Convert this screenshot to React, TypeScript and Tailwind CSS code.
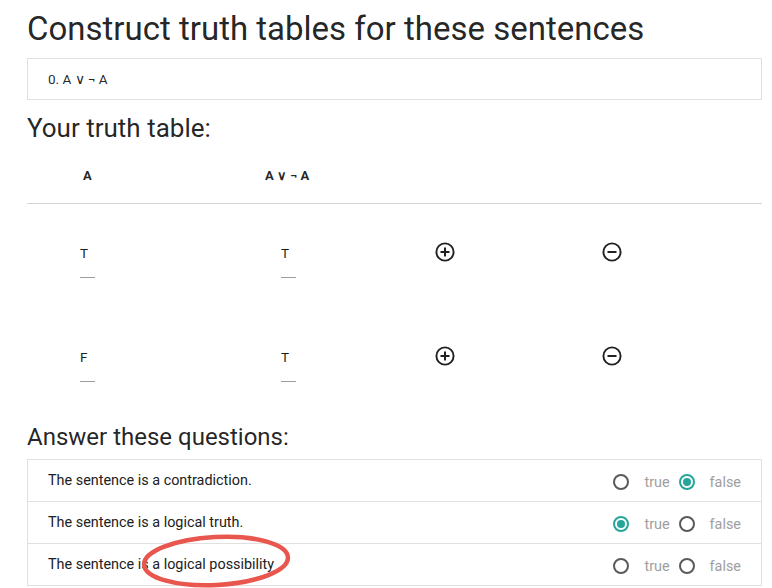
import React from 'react';

const rows = [
  { a: 'T', s: 'T' },
  { a: 'F', s: 'T' },
];

const questions = [
  { text: 'The sentence is a contradiction.', value: 'false' },
  { text: 'The sentence is a logical truth.', value: 'true' },
  { text: 'The sentence is a logical possibility', value: null },
];

function PlusCircle() {
  return (
    <svg width="20" height="20" viewBox="0 0 20 20" fill="none">
      <circle cx="10" cy="10" r="8.6" stroke="#212121" strokeWidth="1.9" />
      <path d="M10 5.5v9M5.5 10h9" stroke="#212121" strokeWidth="2" />
    </svg>
  );
}

function MinusCircle() {
  return (
    <svg width="20" height="20" viewBox="0 0 20 20" fill="none">
      <circle cx="10" cy="10" r="8.6" stroke="#212121" strokeWidth="1.9" />
      <path d="M5.5 10h9" stroke="#212121" strokeWidth="2" />
    </svg>
  );
}

function Radio({ checked }: { checked: boolean }) {
  return checked ? (
    <span className="flex h-4 w-4 shrink-0 items-center justify-center rounded-full border-2 border-[#26a69a]">
      <span className="h-2 w-2 rounded-full bg-[#26a69a]" />
    </span>
  ) : (
    <span className="block h-4 w-4 shrink-0 rounded-full border-2 border-[#5a5a5a]" />
  );
}

export default function App() {
  return (
    <div className="relative min-h-[588px] bg-white pl-[27px] pr-[10px] font-['Roboto',sans-serif] text-[rgba(0,0,0,0.87)]">
      <h1 className="pt-[9px] text-[33px] leading-[40px] font-normal">
        Construct truth tables for these sentences
      </h1>

      <div className="mt-[9px] flex h-[42px] items-center border border-[#e0e0e0] pl-[20px] text-[13.5px]">
        0. A ∨ ¬ A
      </div>

      <h2 className="mt-[12px] text-[26px] leading-[32px] font-normal">Your truth table:</h2>

      {/* header */}
      <div className="flex h-[60px] items-center border-b border-[#d6d6d6] pt-[5px] text-[13px] font-bold">
        <div className="w-[201px] pl-[56px]">A</div>
        <div className="pl-[37px]">A ∨ ¬ A</div>
      </div>

      {rows.map((r, i) => (
        <div key={i} className="flex h-[104px] items-start text-[13.5px]">
          <div className="w-[201px] pt-[41px] pl-[53px]">
            <div className="leading-[16px] text-[#212121]">{r.a}</div>
            <div className="mt-[16px] h-px w-[15px] bg-[#9e9e9e]" />
          </div>
          <div className="w-[207px] pt-[41px] pl-[53px]">
            <div className="leading-[16px] text-[#212121]">{r.s}</div>
            <div className="mt-[16px] h-px w-[15px] bg-[#9e9e9e]" />
          </div>
          <div className="w-[167px] pt-[38px]">
            <PlusCircle />
          </div>
          <div className="pt-[38px]">
            <MinusCircle />
          </div>
        </div>
      ))}

      <h2 className="mt-[9px] text-[24px] leading-[32px] font-normal">Answer these questions:</h2>

      <div className="mt-[6px] border border-[#e0e0e0]">
        {questions.map((q, i) => (
          <div
            key={i}
            className={`flex items-center justify-between pl-[20px] pr-[20px] text-[14.4px] text-[#212121] ${
              i < questions.length - 1 ? 'h-[42px] border-b border-[#e0e0e0]' : 'h-[41px]'
            }`}
          >
            <span>{q.text}</span>
            <div className="flex translate-y-[2px] items-center text-[14.4px] text-[#9e9e9e]">
              <Radio checked={q.value === 'true'} />
              <span className="ml-[15px]">true</span>
              <span className="ml-[9px]">
                <Radio checked={q.value === 'false'} />
              </span>
              <span className="ml-[15px]">false</span>
            </div>
          </div>
        ))}
      </div>

      {/* annotation ellipse */}
      <svg className="pointer-events-none absolute left-[138px] top-[532px]" width="156" height="58" viewBox="0 0 156 58">
        <ellipse cx="78" cy="29" rx="72" ry="24" fill="none" stroke="#e8564d" strokeWidth="4.5" transform="rotate(-3 78 29)" />
      </svg>
    </div>
  );
}
